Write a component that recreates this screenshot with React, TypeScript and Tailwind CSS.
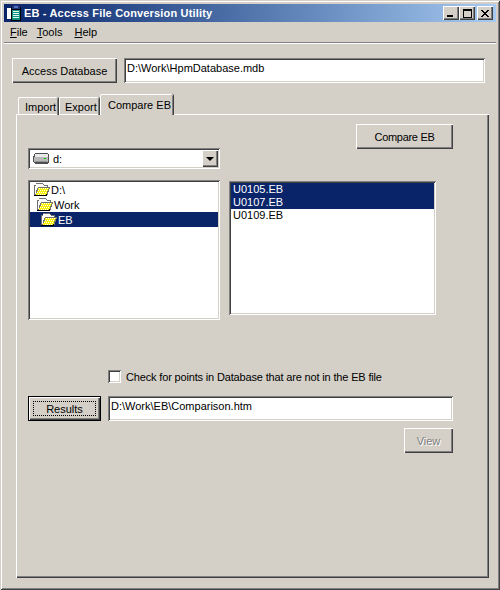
import React from "react";

const raised = "bg-[#d4d0c8] shadow-[inset_1px_1px_0_#ffffff,inset_-1px_-1px_0_#404040,inset_-2px_-2px_0_#808080]";
const sunken = "bg-white shadow-[inset_1px_1px_0_#808080,inset_-1px_-1px_0_#ffffff,inset_2px_2px_0_#404040,inset_-2px_-2px_0_#d4d0c8]";

function Folder() {
  return (
    <svg width="17" height="13" viewBox="0 0 17 13" shapeRendering="crispEdges" className="shrink-0">
      <path d="M3 0h6l2 2h4v2h2v1l-3 8H1V2h2z" fill="#707070" />
      <path d="M2 3h1V1h6l2 2h3v1H5v1H4v2H3v4H2z" fill="#fff" />
      <path d="M5 5h11l-3 7H3l1-4h1z" fill="#f8f000" />
      <path d="M6 5h1v1H6zm2 0h1v1H8zm2 0h1v1h-1zm2 0h1v1h-1zm2 0h1v1h-1zM5 7h1v1H5zm2 0h1v1H7zm2 0h1v1H9zm2 0h1v1h-1zm2 0h1v1h-1zM4 9h1v1H4zm2 0h1v1H6zm2 0h1v1H8zm2 0h1v1h-1zm2 0h1v1h-1zM5 11h1v1H5zm2 0h1v1H7zm2 0h1v1H9zm2 0h1v1h-1z" fill="#fff" />
      <path d="M1 12h13v1H1zM13 11h1v1h-1z" fill="#000" />
    </svg>
  );
}

function Drive() {
  return (
    <svg width="16" height="12" viewBox="0 0 16 12" shapeRendering="crispEdges" className="shrink-0">
      <path d="M2 0h13v1h1v9h-1v1H2v-1H1V9H0V3h1V1h1z" fill="#505050" />
      <path d="M2 1h13v3H2z" fill="#e8e8e8" />
      <path d="M1 4h14v5H1z" fill="#b8b8b8" />
      <path d="M2 8h12v1H2z" fill="#909090" />
      <path d="M11 5h2v1h-2z" fill="#00d000" />
    </svg>
  );
}

function AppIcon() {
  return (
    <svg width="15" height="16" viewBox="0 0 15 16" shapeRendering="crispEdges" className="shrink-0">
      <path d="M0 3h5v11H0z" fill="#fff" />
      <path d="M4 2h10v14H4z" fill="#000" />
      <path d="M5 5h8v10H5z" fill="#109080" />
      <path d="M6 0h6v1h1v3H5V1h1z" fill="#203080" />
      <path d="M7 1h4v2H7z" fill="#5070c0" />
      <path d="M6 6h6v1H6zm0 2h6v1H6zm0 2h6v1H6zm0 2h6v1H6z" fill="#e0fff0" />
    </svg>
  );
}

function CapBtn({ children, className = "" }: { children: React.ReactNode; className?: string }) {
  return (
    <div className={"relative w-4 h-3.5 flex items-center justify-center " + raised + " " + className}>{children}</div>
  );
}

function MenuItem({ first, rest, className = "" }: { first: string; rest: string; className?: string }) {
  return (
    <span className={className}>
      <span className="underline underline-offset-1">{first}</span>
      {rest}
    </span>
  );
}

function Btn({ children, className = "" }: { children: React.ReactNode; className?: string }) {
  return <div className={"flex items-center justify-center shrink-0 " + raised + " " + className}>{children}</div>;
}

function TreeRow({ label, indent, selected }: { label: string; indent: string; selected?: boolean }) {
  return (
    <div className={"h-[15px] flex items-center " + indent + (selected ? " bg-[#0a246a]" : "")}>
      <Folder />
      <span className={"ml-[1px] " + (selected ? "text-white" : "text-black")}>{label}</span>
    </div>
  );
}

function FileRow({ label, selected }: { label: string; selected?: boolean }) {
  return (
    <div className={"h-[13px] leading-[13px] pl-[2px] " + (selected ? "bg-[#0a246a] text-white" : "text-black")}>{label}</div>
  );
}

const tabEdge = "border-l border-t border-white rounded-t-[2px] shadow-[1px_0_0_#404040,inset_-1px_0_0_#808080]";

export default function App() {
  return (
    <div
      className={
        "w-[500px] h-[590px] p-1 flex flex-col overflow-hidden text-[11px] leading-[14px] text-black bg-[#d4d0c8] " +
        "shadow-[inset_1px_1px_0_#d4d0c8,inset_-1px_-1px_0_#404040,inset_2px_2px_0_#ffffff,inset_-2px_-2px_0_#808080] " +
        "font-['Liberation_Sans',Arial,sans-serif]"
      }
    >
      {/* Title bar */}
      <div className="h-[18px] shrink-0 flex items-center pl-[3px] pr-[3px] bg-gradient-to-r from-[#0a246a] to-[#a6caf0]">
        <AppIcon />
        <span className="ml-[2px] text-white font-bold text-[11px] tracking-[0.17px] whitespace-nowrap">EB - Access File Conversion Utility</span>
        <div className="ml-auto flex items-center">
          <CapBtn>
            <span className="absolute left-1 bottom-[3px] w-1.5 h-0.5 bg-black" />
          </CapBtn>
          <CapBtn>
            <span className="w-[9px] h-[9px] border border-black border-t-2" />
          </CapBtn>
          <CapBtn className="ml-0.5">
            <svg width="8" height="7" viewBox="0 0 8 7" shapeRendering="crispEdges">
              <path d="M0 0h2v1h1v1h2V1h1V0h2v1H7v1H6v1H5v1h1v1h1v1h1v1H6V6H5V5H3v1H2v1H0V6h1V5h1V4h1V3H2V2H1V1H0z" fill="#000" />
            </svg>
          </CapBtn>
        </div>
      </div>

      {/* Menu bar */}
      <div className="h-5 shrink-0 flex items-center pl-1.5">
        <MenuItem first="F" rest="ile" />
        <MenuItem first="T" rest="ools" className="ml-[9px]" />
        <MenuItem first="H" rest="elp" className="ml-[12px]" />
      </div>
      <div className="h-0.5 shrink-0 border-t border-[#808080] border-b-0 bg-white" />

      {/* Body */}
      <div className="flex-1 flex flex-col pl-2 pr-[7px] pt-[14px]">
        <div className="flex gap-[7px] pr-1">
          <Btn className="w-[105px] h-[25px]">Access Database</Btn>
          <div className={"flex-1 h-[25px] pl-[3px] pt-[3px] " + sunken}>D:\Work\HpmDatabase.mdb</div>
        </div>

        <div className="ml-1 mt-[11px] flex items-end h-[21px] pl-0.5 relative z-10 -mb-px">
          <div className={"w-[40px] h-[18px] mr-px pl-[6px] pt-[2px] whitespace-nowrap " + tabEdge}>Import</div>
          <div className={"w-[40px] h-[18px] mr-px pl-[5px] pt-[2px] whitespace-nowrap " + tabEdge}>Export</div>
          <div className={"w-[73px] h-[21px] pl-[7px] pt-[3px] bg-[#d4d0c8] whitespace-nowrap " + tabEdge}>Compare EB</div>
        </div>

        <div className="ml-1 h-[464px] shrink-0 flex flex-col pl-3 pr-9 pt-[10px] bg-[#d4d0c8] shadow-[inset_1px_1px_0_#ffffff,inset_-1px_-1px_0_#404040,inset_-2px_-2px_0_#808080]">
          <Btn className="self-end w-[97px] h-[25px] tracking-[-0.3px]">Compare EB</Btn>

          <div className={"-mt-px w-[192px] h-[21px] flex items-center pl-[5px] pr-[2px] " + sunken}>
            <Drive />
            <span className="ml-[4px]">d:</span>
            <div className={"ml-auto w-4 h-[17px] flex items-center justify-center " + raised}>
              <span className="w-0 h-0 border-l-4 border-r-4 border-t-4 border-l-transparent border-r-transparent border-t-black" />
            </div>
          </div>

          <div className="mt-[11px] flex items-start gap-[9px]">
            <div className={"w-[192px] h-[140px] p-[2px] " + sunken}>
              <TreeRow label="D:\" indent="pl-[3px]" />
              <TreeRow label="Work" indent="pl-[6px]" />
              <TreeRow label="EB" indent="pl-[10px]" selected />
            </div>
            <div className={"mt-px w-[207px] h-[134px] p-[2px] " + sunken}>
              <FileRow label="U0105.EB" selected />
              <FileRow label="U0107.EB" selected />
              <FileRow label="U0109.EB" />
            </div>
          </div>

          <div className="mt-[50px] pl-20 flex items-center h-[13px]">
            <div className={"w-[13px] h-[13px] shrink-0 " + sunken} />
            <span className="ml-[5px] whitespace-nowrap tracking-[-0.16px]">Check for points in Database that are not in the EB file</span>
          </div>

          <div className="mt-[13px] flex gap-[7px]">
            <div className="w-[73px] h-[25px] p-[4px] border border-black flex shrink-0 shadow-[inset_1px_1px_0_#ffffff,inset_-1px_-1px_0_#404040,inset_-2px_-2px_0_#808080]">
              <div className="flex-1 flex items-center justify-center border border-dotted border-black">Results</div>
            </div>
            <div className={"flex-1 h-[25px] pl-[3px] pt-[3px] " + sunken}>D:\Work\EB\Comparison.htm</div>
          </div>

          <Btn className="self-end mt-[7px] w-[49px] h-[25px] text-[#808080] [text-shadow:1px_1px_0_#ffffff]">View</Btn>
        </div>
      </div>
    </div>
  );
}
